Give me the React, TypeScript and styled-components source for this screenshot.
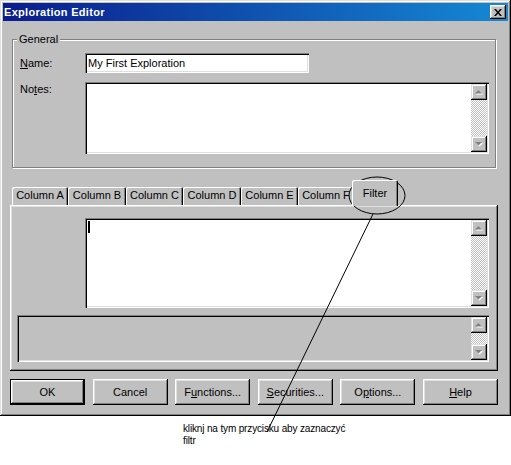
import React from 'react';
import styled, { createGlobalStyle } from 'styled-components';

const GlobalStyle = createGlobalStyle`
  html, body {
    margin: 0;
    padding: 0;
    background: #fff;
  }
  body {
    font-family: "Liberation Sans", Arial, sans-serif;
    font-size: 11px;
    color: #000;
  }
`;

const Page = styled.div`
  position: relative;
  width: 511px;
  height: 465px;
  overflow: hidden;
`;

const Window = styled.div`
  width: 511px;
  height: 416px;
  box-sizing: border-box;
  padding: 3px;
  background: #c0c0c0;
  box-shadow: inset -1px -1px #000, inset 1px 1px #dfdfdf, inset -2px -2px #808080, inset 2px 2px #fff;
  display: flex;
  flex-direction: column;
`;

const TitleBar = styled.div`
  height: 18px;
  display: flex;
  align-items: center;
  justify-content: space-between;
  padding: 0 2px 0 1px;
  background: linear-gradient(to right, #0a1c8c, #1589d4);
  color: #fff;
  font-weight: bold;
  font-size: 11px;
  letter-spacing: 0.3px;
`;

const CloseButton = styled.div`
  width: 16px;
  height: 14px;
  box-sizing: border-box;
  display: flex;
  align-items: center;
  justify-content: center;
  background: #c0c0c0;
  box-shadow: inset -1px -1px #000, inset 1px 1px #fff, inset -2px -2px #808080, inset 2px 2px #dfdfdf;
`;

const Group = styled.fieldset`
  margin: 12px 0 0 9px;
  padding: 0 6px 0 7px;
  width: 484px;
  height: 135px;
  box-sizing: border-box;
  border: 1px solid #808080;
  box-shadow: inset 1px 1px #fff, 1px 1px #fff;
  min-inline-size: auto;
`;

const Legend = styled.legend`
  margin-left: -3px;
  padding: 0 2px;
  line-height: 13px;
  background: #c0c0c0;
`;

const FormGrid = styled.div`
  display: grid;
  grid-template-columns: 65px 404px;
  row-gap: 9px;
  margin-top: 7px;
`;

const Label = styled.div<{ $top?: boolean }>`
  align-self: ${p => (p.$top ? 'start' : 'center')};
  padding-top: ${p => (p.$top ? '1px' : '0')};
  line-height: 13px;
`;

const Sunken = styled.div<{ $w: number; $h: number; $gray?: boolean }>`
  width: ${p => p.$w}px;
  height: ${p => p.$h}px;
  box-sizing: border-box;
  padding: 2px;
  display: flex;
  background: ${p => (p.$gray ? '#c0c0c0' : '#fff')};
  box-shadow: inset 1px 1px #808080, inset 2px 2px #000, inset -1px -1px #fff, inset -2px -2px #dfdfdf;
`;

const FieldText = styled.div`
  flex: 1;
  padding-left: 1px;
  line-height: 16px;
`;

const FieldArea = styled.div`
  flex: 1;
`;

const Caret = styled.div`
  width: 2px;
  height: 12px;
  margin: 1px 0 0 1px;
  background: #000;
`;

const ScrollBar = styled.div`
  width: 16px;
  display: flex;
  flex-direction: column;
`;

const ArrowBtn = styled.div`
  width: 16px;
  height: 16px;
  box-sizing: border-box;
  display: flex;
  align-items: center;
  justify-content: center;
  background: #c0c0c0;
  box-shadow: inset -1px -1px #000, inset 1px 1px #dfdfdf, inset -2px -2px #808080, inset 2px 2px #fff;
`;

const Track = styled.div`
  flex: 1;
  background-image: conic-gradient(#fff 25%, #c0c0c0 0 50%, #fff 0 75%, #c0c0c0 0);
  background-size: 2px 2px;
`;

const TabStrip = styled.div`
  display: flex;
  align-items: flex-end;
  height: 26px;
  margin: 12px 0 -1px 7px;
  padding-left: 2px;
`;

const Tab = styled.div<{ $active?: boolean; $w: number }>`
  position: relative;
  z-index: ${p => (p.$active ? 1 : 0)};
  width: ${p => p.$w}px;
  height: ${p => (p.$active ? 26 : 18)}px;
  box-sizing: border-box;
  margin: 0 ${p => (p.$active ? '-2px' : '0')} ${p => (p.$active ? '0' : '1px')} ${p => (p.$active ? '-2px' : '0')};
  padding-top: ${p => (p.$active ? '7px' : '2px')};
  display: flex;
  justify-content: center;
  line-height: 13px;
  background: #c0c0c0;
  border-radius: 2px 2px 0 0;
  box-shadow: inset 1px 1px #fff, inset -1px 0 #000, inset -2px 0 #808080;
`;

const Panel = styled.div`
  width: 488px;
  height: 166px;
  box-sizing: border-box;
  margin-left: 7px;
  padding: 13px 8px 0 7px;
  display: flex;
  flex-direction: column;
  gap: 7px;
  background: #c0c0c0;
  box-shadow: inset -1px -1px #000, inset 1px 1px #fff, inset -2px -2px #808080, inset 2px 2px #dfdfdf;
`;

const FilterRow = styled.div`
  padding-left: 68px;
`;

const ButtonRow = styled.div`
  display: flex;
  justify-content: space-between;
  width: 488px;
  margin: 8px 0 0 7px;
`;

const Button = styled.div<{ $default?: boolean }>`
  width: 75px;
  height: 26px;
  box-sizing: border-box;
  display: flex;
  align-items: center;
  justify-content: center;
  background: #c0c0c0;
  border: ${p => (p.$default ? '1px solid #000' : 'none')};
  box-shadow: inset -1px -1px #000, inset 1px 1px #fff, inset -2px -2px #808080, inset 2px 2px #dfdfdf;
`;

const Note = styled.div`
  margin: 7px 0 0 183px;
  font-family: "Liberation Sans Narrow", "Liberation Sans", Arial, sans-serif;
  font-size: 10px;
  line-height: 12px;
  letter-spacing: -0.15px;
`;

const Overlay = styled.svg`
  position: absolute;
  left: 0;
  top: 0;
  pointer-events: none;
`;

const Arrow: React.FC<{ down?: boolean }> = ({ down }) => (
  <svg width="8" height="5" viewBox="0 0 8 5">
    {down ? (
      <>
        <path d="M1 1h7L4.5 4.5z" fill="#fff" />
        <path d="M0 0h7L3.5 3.5z" fill="#808080" />
      </>
    ) : (
      <>
        <path d="M4.5 1L8 4.5H1z" fill="#fff" />
        <path d="M3.5 0L7 3.5H0z" fill="#808080" />
      </>
    )}
  </svg>
);

const VScroll: React.FC = () => (
  <ScrollBar>
    <ArrowBtn>
      <Arrow />
    </ArrowBtn>
    <Track />
    <ArrowBtn>
      <Arrow down />
    </ArrowBtn>
  </ScrollBar>
);

const tabs = [
  { label: 'Column A', w: 56 },
  { label: 'Column B', w: 58 },
  { label: 'Column C', w: 57 },
  { label: 'Column D', w: 58 },
  { label: 'Column E', w: 57 },
  { label: 'Column F', w: 56 },
];

const App: React.FC = () => {
  return (
    <Page>
      <GlobalStyle />
      <Window>
        <TitleBar>
          <span>Exploration Editor</span>
          <CloseButton>
            <svg width="8" height="7" viewBox="0 0 8 7">
              <path d="M0 0h2l2 2.5L6 0h2L5 3.5 8 7H6L4 4.5 2 7H0l3-3.5z" fill="#000" />
            </svg>
          </CloseButton>
        </TitleBar>

        <Group>
          <Legend>General</Legend>
          <FormGrid>
            <Label>
              <u>N</u>ame:
            </Label>
            <Sunken $w={224} $h={20}>
              <FieldText>My First Exploration</FieldText>
            </Sunken>
            <Label $top>
              No<u>t</u>es:
            </Label>
            <Sunken $w={404} $h={72}>
              <FieldArea />
              <VScroll />
            </Sunken>
          </FormGrid>
        </Group>

        <TabStrip>
          {tabs.map(t => (
            <Tab key={t.label} $w={t.w}>
              {t.label}
            </Tab>
          ))}
          <Tab $w={46} $active>
            Filter
          </Tab>
        </TabStrip>
        <Panel>
          <FilterRow>
            <Sunken $w={404} $h={90}>
              <FieldArea>
                <Caret />
              </FieldArea>
              <VScroll />
            </Sunken>
          </FilterRow>
          <Sunken $w={472} $h={47} $gray>
            <FieldArea />
            <VScroll />
          </Sunken>
        </Panel>

        <ButtonRow>
          <Button $default>OK</Button>
          <Button>Cancel</Button>
          <Button>
            F<u>u</u>nctions...
          </Button>
          <Button>
            <u>S</u>ecurities...
          </Button>
          <Button>
            O<u>p</u>tions...
          </Button>
          <Button>
            <u>H</u>elp
          </Button>
        </ButtonRow>
      </Window>

      <Note>
        kliknj na tym przycisku aby zaznaczyć
        <br />
        filtr
      </Note>

      <Overlay width="511" height="465">
        <ellipse cx="377" cy="195.5" rx="28" ry="18.5" fill="none" stroke="#000" strokeWidth="1" />
        <line x1="373" y1="214" x2="267" y2="432" stroke="#000" strokeWidth="1" />
      </Overlay>
    </Page>
  );
};

export default App;
